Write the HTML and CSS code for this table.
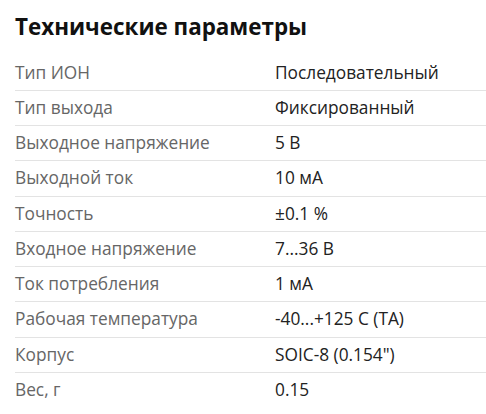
FILE: index.html
```html
<!DOCTYPE html>
<html lang="ru">
<head>
<meta charset="utf-8">
<link rel="stylesheet" href="styles.css">
</head>
<body>
<section class="specs">
  <h2 class="specs-title">Технические параметры</h2>
  <table class="specs-table">
    <tr><td class="label">Тип ИОН</td><td class="value">Последовательный</td></tr>
    <tr><td class="label">Тип выхода</td><td class="value">Фиксированный</td></tr>
    <tr><td class="label">Выходное напряжение</td><td class="value">5 В</td></tr>
    <tr><td class="label">Выходной ток</td><td class="value">10 мА</td></tr>
    <tr><td class="label">Точность</td><td class="value">±0.1 %</td></tr>
    <tr><td class="label">Входное напряжение</td><td class="value">7...36 В</td></tr>
    <tr><td class="label">Ток потребления</td><td class="value">1 мА</td></tr>
    <tr><td class="label">Рабочая температура</td><td class="value">-40...+125 C (TA)</td></tr>
    <tr><td class="label">Корпус</td><td class="value">SOIC-8 (0.154")</td></tr>
    <tr><td class="label">Вес, г</td><td class="value">0.15</td></tr>
  </table>
</section>
</body>
</html>
```
FILE: styles.css
```css
html, body {
  margin: 0;
  padding: 0;
  background: #fff;
}
body {
  font-family: "Open Sans", sans-serif;
  color: #222;
}
.specs {
  padding: 0 0 0 15px;
}
.specs-title {
  margin: 0;
  padding-top: 12.3px;
  padding-bottom: 13.45px;
  font-size: 22.4px;
  font-weight: 700;
  line-height: 30px;
  color: #111;
}
.specs-table {
  width: 100%;
  border-collapse: collapse;
  font-size: 17.3px;
  line-height: 24.25px;
}
.specs-table td {
  padding: 5px 0;
  border-bottom: 1px solid #e3e3e3;
  vertical-align: top;
  white-space: nowrap;
}
.specs-table tr:last-child td {
  border-bottom: none;
}
.label {
  width: 260px;
  color: #666;
}
.value {
  color: #222;
}
```
